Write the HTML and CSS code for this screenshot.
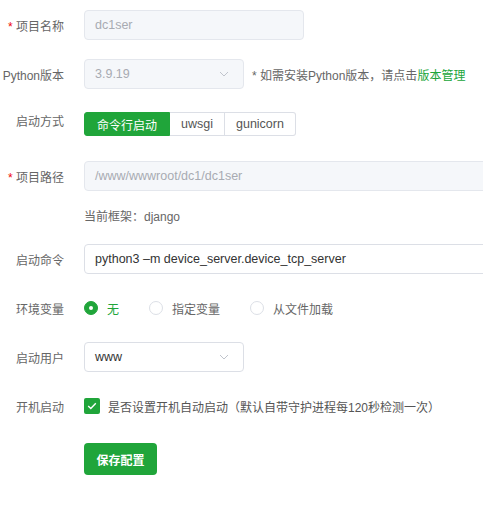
FILE: index.html
```html
<!DOCTYPE html>
<html lang="zh-CN">
<head>
<meta charset="utf-8">
<title>项目配置</title>
<link rel="stylesheet" href="styles.css">
</head>
<body>
<form class="form">
  <div class="row">
    <label class="label"><span class="req">*</span> 项目名称</label>
    <div class="input input-disabled input-name">dc1ser</div>
  </div>
  <div class="row">
    <label class="label">Python版本</label>
    <div class="select select-disabled">
      <span>3.9.19</span>
      <svg class="chev" width="10" height="6" viewBox="0 0 10 6"><path d="M1 1 L5 5 L9 1" fill="none" stroke="#c0c4cc" stroke-width="1"/></svg>
    </div>
    <span class="hint">* 如需安装Python版本，请点击<a class="link">版本管理</a></span>
  </div>
  <div class="row row-group">
    <label class="label">启动方式</label>
    <div class="btn-group">
      <span class="seg seg-active">命令行启动</span>
      <span class="seg">uwsgi</span>
      <span class="seg">gunicorn</span>
    </div>
  </div>
  <div class="row">
    <label class="label"><span class="req">*</span> 项目路径</label>
    <div class="clip">
      <div class="input input-disabled input-wide">/www/wwwroot/dc1/dc1ser</div>
    </div>
  </div>
  <div class="row row-text">
    <span class="label"></span>
    <span class="plain">当前框架：django</span>
  </div>
  <div class="row">
    <label class="label">启动命令</label>
    <div class="clip">
      <div class="input input-wide input-dark">python3 –m device_server.device_tcp_server</div>
    </div>
  </div>
  <div class="row">
    <label class="label">环境变量</label>
    <div class="radios">
      <span class="radio radio-on"><span class="dot"></span><span class="rtext">无</span></span>
      <span class="radio"><span class="dot"></span><span class="rtext">指定变量</span></span>
      <span class="radio"><span class="dot"></span><span class="rtext">从文件加载</span></span>
    </div>
  </div>
  <div class="row">
    <label class="label">启动用户</label>
    <div class="select">
      <span class="sel-val">www</span>
      <svg class="chev" width="10" height="6" viewBox="0 0 10 6"><path d="M1 1 L5 5 L9 1" fill="none" stroke="#c0c4cc" stroke-width="1"/></svg>
    </div>
  </div>
  <div class="row">
    <label class="label">开机启动</label>
    <span class="check">
      <span class="box"><svg width="10" height="8" viewBox="0 0 10 8"><path d="M1.2 4 L3.8 6.5 L8.8 1.2" fill="none" stroke="#fff" stroke-width="1.4"/></svg></span>
      <span class="ctext">是否设置开机自动启动（默认自带守护进程每120秒检测一次）</span>
    </span>
  </div>
  <div class="row row-btn">
    <span class="label"></span>
    <button type="button" class="save">保存配置</button>
  </div>
</form>
</body>
</html>
```

FILE: styles.css
```css
html, body {
  margin: 0;
  padding: 0;
  background: #fff;
  overflow: hidden;
}
body {
  width: 483px;
  height: 527px;
  font-family: "Liberation Sans", "Noto Sans CJK SC", sans-serif;
  font-size: 12px;
  color: #666;
}
.form {
  display: flex;
  flex-direction: column;
  gap: 19px;
  padding-top: 10px;
  width: 483px;
  overflow: hidden;
}
.row {
  display: flex;
  align-items: center;
  height: 30px;
  gap: 20px;
  white-space: nowrap;
}
.label {
  width: 64px;
  flex: none;
  text-align: right;
  color: #666;
}
.req {
  color: #ef0808;
}
.clip {
  flex: 1;
  min-width: 0;
  overflow: hidden;
  height: 30px;
}
.input, .select {
  box-sizing: border-box;
  height: 30px;
  border: 1px solid #dcdfe6;
  border-radius: 4px;
  padding: 0 10px;
  display: flex;
  align-items: center;
  background: #fff;
  flex: none;
  font-size: 12.5px;
}
.input-disabled, .select-disabled {
  background: #f5f7fa;
  border-color: #e4e7ed;
  color: #a8abb2;
}
.input-name {
  width: 220px;
}
.input-wide {
  width: 440px;
}
.input-dark {
  color: #333;
}
.select {
  width: 160px;
  justify-content: space-between;
  padding-right: 14px;
}
.sel-val {
  color: #333;
}
.hint {
  margin-left: -12px;
  color: #666;
}
.link {
  color: #20a53a;
}
.row-group {
  height: 34px;
  align-items: flex-start;
  padding-top: 4px;
  box-sizing: border-box;
}
.btn-group {
  display: flex;
  height: 24px;
}
.seg {
  box-sizing: border-box;
  height: 24px;
  padding: 0 11px;
  display: flex;
  align-items: center;
  border: 1px solid #dcdfe6;
  border-left: none;
  color: #555;
  font-size: 12.5px;
}
.seg:first-child {
  border-left: 1px solid #dcdfe6;
  border-radius: 3px 0 0 3px;
  padding: 0 12px;
  font-size: 12px;
}
.seg:last-child {
  border-radius: 0 3px 3px 0;
}
.seg-active {
  background: #20a53a;
  border-color: #20a53a !important;
  color: #fff;
}
.row-text {
  height: 20px;
  margin-top: -5px;
}
.plain {
  color: #666;
}
.radios {
  display: flex;
  gap: 30px;
}
.radio {
  display: flex;
  align-items: center;
  gap: 9px;
  color: #666;
}
.dot {
  box-sizing: border-box;
  width: 14px;
  height: 14px;
  border: 1px solid #dcdfe6;
  border-radius: 50%;
  background: #fff;
  position: relative;
}
.radio-on .dot {
  border-color: #20a53a;
  background: #20a53a;
}
.radio-on .dot::after {
  content: "";
  position: absolute;
  left: 4px;
  top: 4px;
  width: 4px;
  height: 4px;
  border-radius: 50%;
  background: #fff;
}
.radio-on .rtext {
  color: #20a53a;
}
.check {
  display: flex;
  align-items: center;
  gap: 8px;
  color: #555;
}
.box {
  width: 16px;
  height: 16px;
  border-radius: 2px;
  background: #20a53a;
  display: flex;
  align-items: center;
  justify-content: center;
}
.row-btn {
  height: 32px;
  margin-top: 3px;
}
.save {
  box-sizing: border-box;
  height: 32px;
  width: 73px;
  border: none;
  border-radius: 4px;
  background: #20a53a;
  color: #fff;
  font-family: inherit;
  font-size: 12px;
  font-weight: bold;
  padding: 0;
}
```
